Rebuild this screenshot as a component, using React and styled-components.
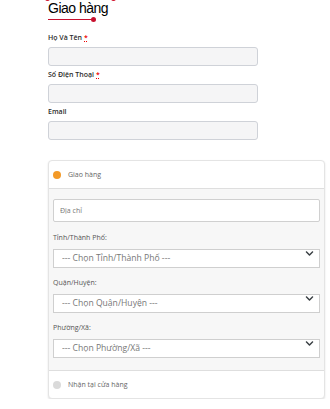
import styled, { createGlobalStyle } from "styled-components";
import { FaChevronDown } from "react-icons/fa";

const GlobalStyle = createGlobalStyle`
   body {
      margin: 0;
      background: #fff;
      font-family: "Open Sans", "Noto Sans", sans-serif;
   }
`;

const Page = styled.div`
   padding: 0 5px 0 48px;
   width: 330px;
   box-sizing: border-box;
`;

const Heading = styled.div`
   position: relative;
   width: max-content;
`;

const Title = styled.h2`
   margin: 0;
   font-family: "Liberation Sans", Arial, sans-serif;
   font-weight: 400;
   font-size: 14px;
   line-height: 16px;
   letter-spacing: -0.5px;
   color: #000;
`;

const Corner = styled.span`
   position: absolute;
   top: -4px;
   left: ${(props) => props.left}px;
   width: 5px;
   height: 5px;
   border-radius: 50%;
   background: #d0112b;
`;

const Underline = styled.div`
   position: relative;
   margin-top: 3px;
   width: 45px;
   height: 1px;
   background: #c8102e;
   &::after {
      content: "";
      position: absolute;
      right: -3px;
      top: -2px;
      width: 5px;
      height: 5px;
      border-radius: 50%;
      background: #c8102e;
   }
`;

const Fields = styled.div`
   display: flex;
   flex-direction: column;
   gap: 4px;
   margin-top: 13px;
   width: 210px;
`;

const Field = styled.div`
   display: flex;
   flex-direction: column;
   gap: 4px;
`;

const Label = styled.label`
   font-size: 7px;
   line-height: 10px;
   font-weight: 600;
   color: #2b2b2b;
`;

const Required = styled.abbr`
   color: #e00;
   margin-left: 2px;
   text-decoration: underline dotted;
`;

const TextInput = styled.input`
   box-sizing: border-box;
   height: 19px;
   border: 1px solid #cfd2d8;
   border-radius: 3px;
   background: #f5f5f6;
   outline: none;
`;

const Card = styled.div`
   margin-top: 20px;
   border: 1px solid #e4e4e4;
   border-radius: 4px;
   box-shadow: 0 1px 2px rgba(0, 0, 0, 0.12);
   background: #fff;
   overflow: hidden;
`;

const Option = styled.div`
   display: flex;
   align-items: center;
   gap: 7px;
   height: 27px;
   padding-left: 4px;
   font-size: 7px;
   color: #666;
   border-top: ${(props) => (props.divided ? "1px solid #dedede" : "none")};
`;

const Dot = styled.span`
   width: 8px;
   height: 8px;
   border-radius: 50%;
   background: ${(props) => (props.active ? "#f39a28" : "#dadada")};
`;

const Panel = styled.div`
   background: #f7f7f7;
   border-top: 1px solid #dedede;
   padding: 10px 4px 17px 4px;
   display: flex;
   flex-direction: column;
`;

const Address = styled.input`
   box-sizing: border-box;
   height: 23px;
   border: 1px solid #d0d0d0;
   border-radius: 2px;
   background: #fff;
   padding: 0 6px;
   font-family: inherit;
   font-size: 7px;
   outline: none;
   &::placeholder {
      color: #777;
   }
`;

const Group = styled.div`
   display: flex;
   flex-direction: column;
   gap: 1px;
   margin-top: 15px;
   &:first-of-type {
      margin-top: 11px;
   }
`;

const PanelLabel = styled.label`
   font-size: 7px;
   line-height: 10px;
   color: #555;
`;

const SelectBox = styled.div`
   position: relative;
   height: 19px;
`;

const Select = styled.select`
   appearance: none;
   box-sizing: border-box;
   width: 100%;
   height: 100%;
   border: 1px solid #cfcfcf;
   border-radius: 0;
   background: #fff;
   padding: 0 0 0 8px;
   font-family: inherit;
   font-size: 8.6px;
   color: #777;
   outline: none;
`;

const Chevron = styled(FaChevronDown)`
   position: absolute;
   right: 6px;
   top: 5px;
   width: 9px;
   height: 9px;
   color: #3a3f44;
   pointer-events: none;
`;

const places = [
   { label: "Tỉnh/Thành Phố:", text: "--- Chọn Tỉnh/Thành Phố ---" },
   { label: "Quận/Huyện:", text: "--- Chọn Quận/Huyện ---" },
   { label: "Phường/Xã:", text: "--- Chọn Phường/Xã ---" },
];

function App() {
   return (
      <Page>
         <GlobalStyle />
         <Heading>
            <Corner left={-3} />
            <Title>Giao hàng</Title>
            <Corner left={63} />
            <Underline />
         </Heading>
         <Fields>
            <Field>
               <Label>
                  Họ Và Tên<Required title="required">*</Required>
               </Label>
               <TextInput type="text" />
            </Field>
            <Field>
               <Label>
                  Số Điện Thoại<Required title="required">*</Required>
               </Label>
               <TextInput type="text" />
            </Field>
            <Field>
               <Label>Email</Label>
               <TextInput type="email" />
            </Field>
         </Fields>
         <Card>
            <Option>
               <Dot active />
               Giao hàng
            </Option>
            <Panel>
               <Address placeholder="Địa chỉ" />
               {places.map((p) => (
                  <Group key={p.label}>
                     <PanelLabel>{p.label}</PanelLabel>
                     <SelectBox>
                        <Select defaultValue="">
                           <option value="">{p.text}</option>
                        </Select>
                        <Chevron />
                     </SelectBox>
                  </Group>
               ))}
            </Panel>
            <Option divided>
               <Dot />
               Nhận tại cửa hàng
            </Option>
         </Card>
      </Page>
   );
}

export default App;
